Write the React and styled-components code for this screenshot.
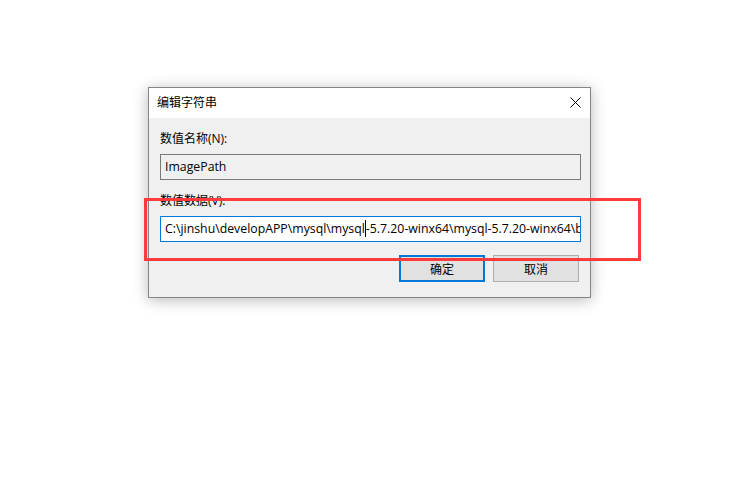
import React from "react";
import styled, { createGlobalStyle } from "styled-components";

const Global = createGlobalStyle`
  html, body { margin: 0; padding: 0; background: #ffffff; }
  body { font-family: "Open Sans", "Noto Sans CJK SC", sans-serif; }
`;

const Page = styled.div`
  position: relative;
  width: 752px;
  height: 477px;
  padding: 87px 0 0 148px;
  box-sizing: border-box;
`;

const Dialog = styled.div`
  width: 443px;
  height: 211px;
  box-sizing: border-box;
  border: 1px solid #858585;
  background: #f0f0f0;
  box-shadow: 0 2px 14px rgba(0, 0, 0, 0.28);
  display: flex;
  flex-direction: column;
`;

const TitleBar = styled.div`
  height: 30px;
  background: #ffffff;
  display: flex;
  align-items: center;
  justify-content: space-between;
  padding: 0 9px 0 8px;
  flex-shrink: 0;
`;

const Title = styled.span`
  font-size: 12px;
  color: #000;
  line-height: 16px;
  margin-top: -1px;
`;

const Close = styled.button`
  width: 12px;
  height: 12px;
  padding: 0;
  border: 0;
  background: transparent;
  display: flex;
  align-items: center;
  justify-content: center;
  margin-top: -1px;
`;

const Body = styled.div`
  flex: 1;
  display: flex;
  flex-direction: column;
  padding: 13px 9px 15px 11px;
`;

const Label = styled.div`
  font-size: 12px;
  line-height: 16px;
  height: 16px;
  color: #000;
  margin-bottom: 7px;
`;

const Field = styled.div`
  height: 26px;
  box-sizing: border-box;
  border: 1px solid ${(p) => (p.$focused ? "#0078d7" : "#7a7a7a")};
  background: ${(p) => (p.$focused ? "#ffffff" : "#f0f0f0")};
  font-size: 12.3px;
  line-height: 24px;
  padding-left: 4px;
  color: #000;
  white-space: nowrap;
  overflow: hidden;
  margin-bottom: 13px;
`;

const Caret = styled.span`
  display: inline-block;
  width: 1px;
  height: 17px;
  background: #000;
  vertical-align: middle;
  margin: -2px 0 0 0;
`;

const Buttons = styled.div`
  display: flex;
  justify-content: flex-end;
  gap: 8px;
  padding-right: 2px;
`;

const Button = styled.button`
  width: 86px;
  height: 27px;
  box-sizing: border-box;
  background: #e1e1e1;
  border: ${(p) => (p.$primary ? "2px solid #0078d7" : "1px solid #adadad")};
  font-family: "Open Sans", "Noto Sans CJK SC", sans-serif;
  font-size: 12px;
  color: #000;
  padding: 0;
  display: flex;
  align-items: center;
  justify-content: center;
`;

const Annotation = styled.div`
  position: absolute;
  left: 144px;
  top: 198px;
  width: 497px;
  height: 63px;
  box-sizing: border-box;
  border: 3px solid #ff3b3b;
  pointer-events: none;
`;

export default function App() {
  return (
    <>
      <Global />
      <Page>
        <Dialog>
          <TitleBar>
            <Title>编辑字符串</Title>
            <Close aria-label="关闭">
              <svg width="11" height="11" viewBox="0 0 11 11">
                <path d="M0.5 0.5 L10.5 10.5 M10.5 0.5 L0.5 10.5" stroke="#000" strokeWidth="1" fill="none" />
              </svg>
            </Close>
          </TitleBar>
          <Body>
            <Label>数值名称(N):</Label>
            <Field>ImagePath</Field>
            <Label>数值数据(V):</Label>
            <Field $focused>
              C:\jinshu\developAPP\mysql\mysql<Caret />-5.7.20-winx64\mysql-5.7.20-winx64\bin\mysqld MySQL
            </Field>
            <Buttons>
              <Button $primary>确定</Button>
              <Button>取消</Button>
            </Buttons>
          </Body>
        </Dialog>
        <Annotation />
      </Page>
    </>
  );
}
